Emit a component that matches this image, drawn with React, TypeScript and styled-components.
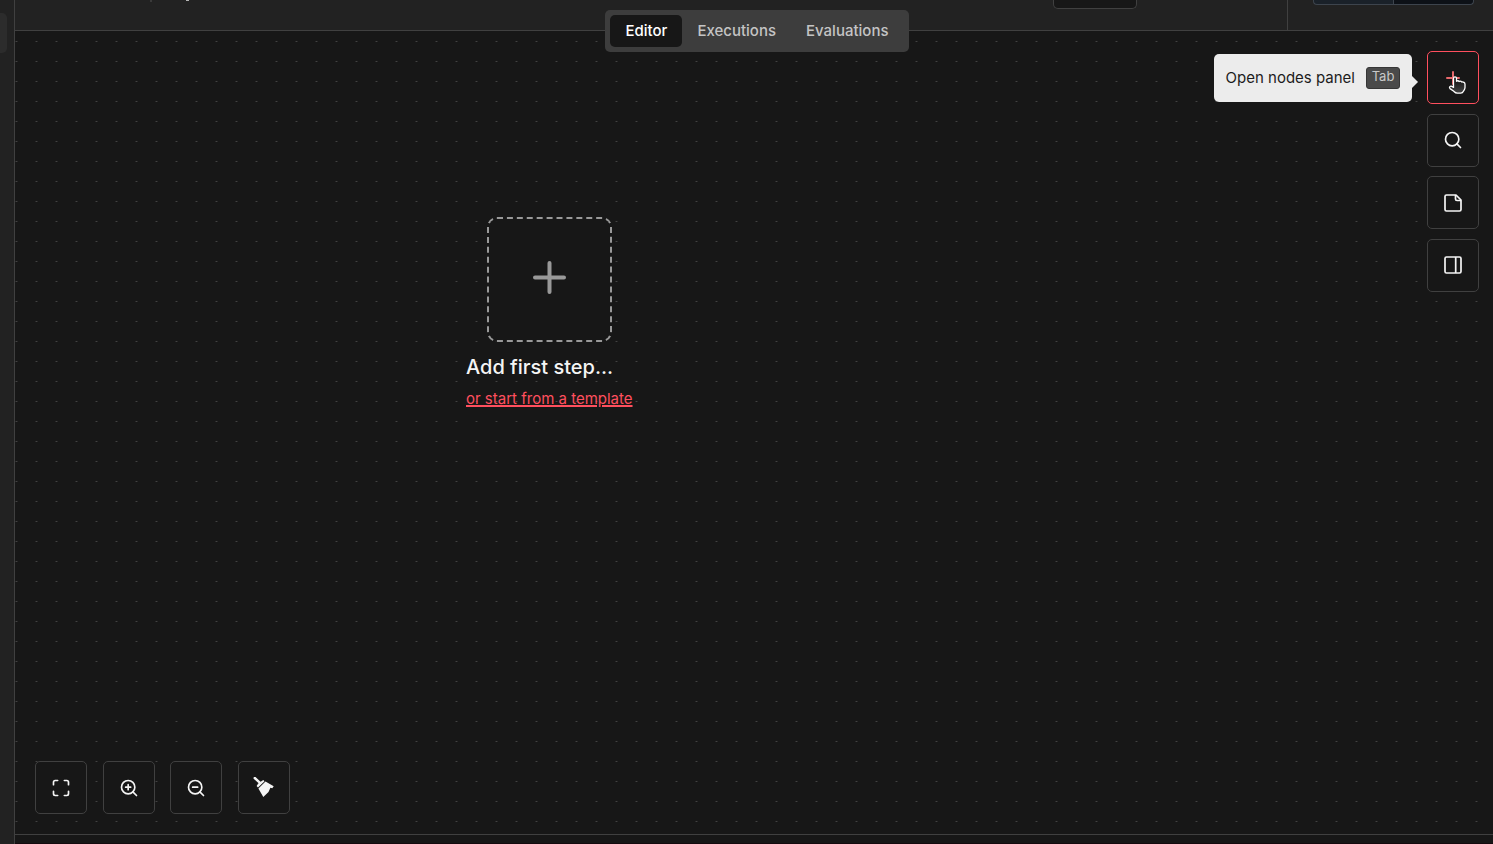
import React from 'react';
import styled, { createGlobalStyle } from 'styled-components';
import { Search, ZoomIn, ZoomOut, Maximize } from 'lucide-react';

const color = {
  panel: '#222222',
  canvas: '#171717',
  line: '#404040',
  control: '#3d3d3d',
  accent: '#ff4f5e',
  icon: '#f5f5f5',
};

const GlobalStyle = createGlobalStyle`
  * { box-sizing: border-box; }
  body {
    margin: 0;
    background: ${color.canvas};
    color: #f5f5f5;
    font-family: Inter, sans-serif;
    font-size: 15px;
  }
  button { font-family: inherit; cursor: pointer; }
`;

const Shell = styled.div`
  display: flex;
  min-height: 100vh;
  overflow: hidden;
`;

const Sidebar = styled.aside`
  width: 15px;
  flex: none;
  padding-top: 13px;
  background: ${color.panel};
  border-right: 1px solid ${color.line};
`;

const SidebarItem = styled.div`
  width: 7px;
  height: 40px;
  border-radius: 0 5px 5px 0;
  background: #2c2c2c;
`;

const Main = styled.main`
  position: relative;
  flex: 1;
  min-width: 0;
  display: flex;
  flex-direction: column;
`;

const Header = styled.header`
  display: flex;
  align-items: flex-start;
  height: 31px;
  background: ${color.panel};
  border-bottom: 1px solid ${color.line};
`;

const Crumbs = styled.div`
  flex: 1;
  display: flex;
  gap: 34px;
  padding-left: 135px;
`;

const CrumbMark = styled.span<{ $bright?: boolean }>`
  width: ${(p) => (p.$bright ? 3 : 2)}px;
  height: ${(p) => (p.$bright ? 1 : 2)}px;
  background: ${(p) => (p.$bright ? '#b5b5b5' : '#3a3a3a')};
`;

const HeaderButton = styled.button`
  width: 84px;
  height: 9px;
  margin-right: 150px;
  padding: 0;
  border: 1px solid ${color.line};
  border-top: 0;
  border-radius: 0 0 5px 5px;
  background: ${color.canvas};
`;

const StarArea = styled.div`
  display: flex;
  align-items: flex-start;
  align-self: stretch;
  padding: 0 19px 0 25px;
  border-left: 1px solid ${color.line};
`;

const StarPart = styled.button<{ $count?: boolean }>`
  width: ${(p) => (p.$count ? 81 : 80)}px;
  height: 5px;
  padding: 0;
  border: 1px solid #3d444d;
  border-top: 0;
  border-right-width: ${(p) => (p.$count ? 1 : 0)}px;
  border-radius: ${(p) => (p.$count ? '0 0 4px 0' : '0 0 0 4px')};
  background: ${(p) => (p.$count ? '#0d1117' : '#1a2129')};
`;

const TabsOverlay = styled.div`
  position: absolute;
  z-index: 2;
  top: 10px;
  left: 0;
  right: 0;
  display: flex;
  justify-content: center;
  padding-left: 6px;
  pointer-events: none;
`;

const Tabs = styled.nav`
  display: flex;
  padding: 5px;
  border-radius: 5px;
  background: ${color.control};
  pointer-events: auto;
`;

const Tab = styled.button<{ $active?: boolean }>`
  height: 32px;
  padding: 0 15px;
  border: 0;
  border-radius: 5px;
  background: ${(p) => (p.$active ? color.canvas : 'transparent')};
  color: ${(p) => (p.$active ? '#ffffff' : '#c4c4c4')};
  font-size: 15px;
  font-weight: 500;
  line-height: 32px;
`;

const Canvas = styled.section`
  position: relative;
  flex: 1;
  display: flex;
  flex-direction: column;
  justify-content: space-between;
  padding: 20px 14px 20px 20px;
  background: ${color.canvas};
`;

const Dots = styled.svg`
  position: absolute;
  inset: 0;
  width: 100%;
  height: 100%;
`;

const Toolbar = styled.div<{ $vertical?: boolean }>`
  position: relative;
  display: flex;
  flex-direction: ${(p) => (p.$vertical ? 'column' : 'row')};
  justify-content: space-between;
  align-self: ${(p) => (p.$vertical ? 'flex-end' : 'flex-start')};
  ${(p) => (p.$vertical ? 'height: 241px;' : 'width: 255px;')}
`;

const IconButton = styled.button<{ $active?: boolean }>`
  display: flex;
  align-items: center;
  justify-content: center;
  width: 52px;
  height: 53px;
  padding: 0;
  border: 1px solid ${(p) => (p.$active ? color.accent : color.line)};
  border-radius: 5px;
  background: ${color.canvas};
  color: ${(p) => (p.$active ? '#e8696c' : color.icon)};
`;

const TooltipAnchor = styled.div`
  position: relative;
`;

const Tooltip = styled.div`
  position: absolute;
  top: 3px;
  right: 67px;
  display: flex;
  align-items: center;
  gap: 11px;
  height: 48px;
  padding: 0 12px;
  border-radius: 5px;
  background: #ececec;
  color: #1c1c1c;
  white-space: nowrap;

  &::after {
    content: '';
    position: absolute;
    top: 22px;
    left: 100%;
    border: 6px solid transparent;
    border-left-color: #ececec;
    border-right: 0;
  }
`;

const TooltipText = styled.span`
  padding-bottom: 2px;
`;

const Key = styled.kbd`
  width: 34px;
  height: 22px;
  border: 1px solid #363636;
  border-radius: 3px;
  background: #4a4a4a;
  color: #c8c8c8;
  font-family: inherit;
  font-size: 13px;
  line-height: 17px;
  text-align: center;
`;

const Pointer = styled.svg`
  position: absolute;
  top: 25px;
  left: 21px;
  pointer-events: none;
`;

const FirstStep = styled.div`
  position: absolute;
  top: 186px;
  left: 451px;
  display: flex;
  flex-direction: column;
`;

const AddStep = styled.button`
  display: flex;
  align-items: center;
  justify-content: center;
  align-self: center;
  width: 125px;
  height: 125px;
  padding: 0 0 4px;
  border: 2px dashed #999999;
  border-radius: 10px;
  background: ${color.canvas};
  color: #999999;
`;

const StepTitle = styled.div`
  margin-top: 13px;
  font-size: 20px;
  font-weight: 500;
  line-height: 24px;
`;

const TemplateLink = styled.a`
  margin-top: 11px;
  color: ${color.accent};
  font-size: 15px;
  line-height: 18px;
  text-decoration: underline;
  text-decoration-thickness: 2px;
`;

const LogPanel = styled.footer`
  height: 10px;
  background: ${color.canvas};
  border-top: 1px solid ${color.line};
  border-bottom: 1px solid #140a0e;
`;

const BroomIcon = () => (
  <svg width="21" height="21" viewBox="0 0 21 21" fill="currentColor" aria-hidden="true">
    <path d="M1.700 1 7.300 6.200" stroke="currentColor" strokeWidth="2.400" strokeLinecap="round" />
    <path d="M10.300 3 11.500 4.200 5 10.500 3.600 9.100 5.300 6.600 7.600 4.800Z" />
    <path d="M12.500 4.600 20.700 9.300 19.300 11.300 17.400 10.700 15.500 14.900 10.300 20 5.400 11.600Z" />
  </svg>
);

const NoteIcon = () => (
  <svg width="18" height="18" viewBox="0 0 18 18" fill="none" stroke="currentColor" strokeWidth="1.700" strokeLinejoin="round" aria-hidden="true">
    <path d="M12 1H2.500A1.500 1.500 0 0 0 1 2.500v13A1.500 1.500 0 0 0 2.500 17h13a1.500 1.500 0 0 0 1.500-1.500V6Z" />
    <path d="M11.500 1v4A1.500 1.500 0 0 0 13 6.500h4" />
  </svg>
);

const PanelIcon = () => (
  <svg width="18" height="18" viewBox="0 0 18 18" fill="none" stroke="currentColor" strokeWidth="1.700" aria-hidden="true">
    <rect x="1" y="1" width="16" height="16" rx="1.500" />
    <path d="M11.700 1v16" />
  </svg>
);

const PlusIcon = ({ size, weight }: { size: number; weight: number }) => (
  <svg width={size} height={size} viewBox={`0 0 ${size} ${size}`} fill="none" stroke="currentColor" strokeWidth={weight} strokeLinecap="round" aria-hidden="true">
    <path d={`M${size / 2} ${weight / 2}V${size - weight / 2}M${weight / 2} ${size / 2}H${size - weight / 2}`} />
  </svg>
);

const HandPointer = () => (
  <Pointer width="19" height="19" viewBox="0 0 19 19" aria-hidden="true">
    <defs>
      <linearGradient id="hand-fill" x1="0" y1="0" x2="0" y2="1">
        <stop offset="0.300" stopColor="#1c1c1c" />
        <stop offset="1" stopColor="#444444" />
      </linearGradient>
    </defs>
    <path
      d="M5.500 2.300c0-1.800 3-1.800 3 0v3c.8-.6 2.100-.5 2.700.2.900-.5 2-.3 2.500.5 1.700-.3 3.300.6 3.300 2.300v3.200c0 1.900-1 2.600-1.600 3.800-.5 1.200-1.200 1.800-2.600 1.800H9.300c-1.800 0-2.500-.8-3.500-1.800L2 12.600c-1.300-1.500.3-3 1.900-2.200l1.600 1Z"
      fill="url(#hand-fill)"
      stroke="#ffffff"
      strokeWidth="1.300"
      strokeLinejoin="round"
    />
  </Pointer>
);

const DotGrid = () => (
  <Dots aria-hidden="true">
    <defs>
      <pattern id="grid-dot" width="20" height="20" patternUnits="userSpaceOnUse">
        <rect x="0" y="10" width="3" height="1" fill="#2a2a2a" />
        <rect x="1" y="10" width="1" height="1" fill="#424242" />
      </pattern>
    </defs>
    <rect width="100%" height="100%" fill="url(#grid-dot)" />
  </Dots>
);

export default function App() {
  return (
    <>
      <GlobalStyle />
      <Shell>
        <Sidebar>
          <SidebarItem />
        </Sidebar>
        <Main>
          <Header>
            <Crumbs>
              <CrumbMark />
              <CrumbMark $bright />
            </Crumbs>
            <HeaderButton aria-label="Share" />
            <StarArea>
              <StarPart aria-label="Star" />
              <StarPart $count aria-label="Star count" />
            </StarArea>
          </Header>
          <TabsOverlay>
            <Tabs>
              <Tab $active>Editor</Tab>
              <Tab>Executions</Tab>
              <Tab>Evaluations</Tab>
            </Tabs>
          </TabsOverlay>
          <Canvas>
            <DotGrid />
            <FirstStep>
              <AddStep aria-label="Add first step">
                <PlusIcon size={33} weight={4} />
              </AddStep>
              <StepTitle>Add first step...</StepTitle>
              <TemplateLink href="#templates">or start from a template</TemplateLink>
            </FirstStep>
            <Toolbar $vertical>
              <TooltipAnchor>
                <IconButton $active aria-label="Open nodes panel">
                  <PlusIcon size={14} weight={2} />
                </IconButton>
                <Tooltip role="tooltip">
                  <TooltipText>Open nodes panel</TooltipText>
                  <Key>Tab</Key>
                </Tooltip>
                <HandPointer />
              </TooltipAnchor>
              <IconButton aria-label="Search">
                <Search size={20} strokeWidth={2} />
              </IconButton>
              <IconButton aria-label="Add sticky note">
                <NoteIcon />
              </IconButton>
              <IconButton aria-label="Toggle side panel">
                <PanelIcon />
              </IconButton>
            </Toolbar>
            <Toolbar>
              <IconButton aria-label="Fit to view">
                <Maximize size={20} strokeWidth={2} />
              </IconButton>
              <IconButton aria-label="Zoom in">
                <ZoomIn size={20} strokeWidth={2} />
              </IconButton>
              <IconButton aria-label="Zoom out">
                <ZoomOut size={20} strokeWidth={2} />
              </IconButton>
              <IconButton aria-label="Tidy up">
                <BroomIcon />
              </IconButton>
            </Toolbar>
          </Canvas>
          <LogPanel />
        </Main>
      </Shell>
    </>
  );
}
